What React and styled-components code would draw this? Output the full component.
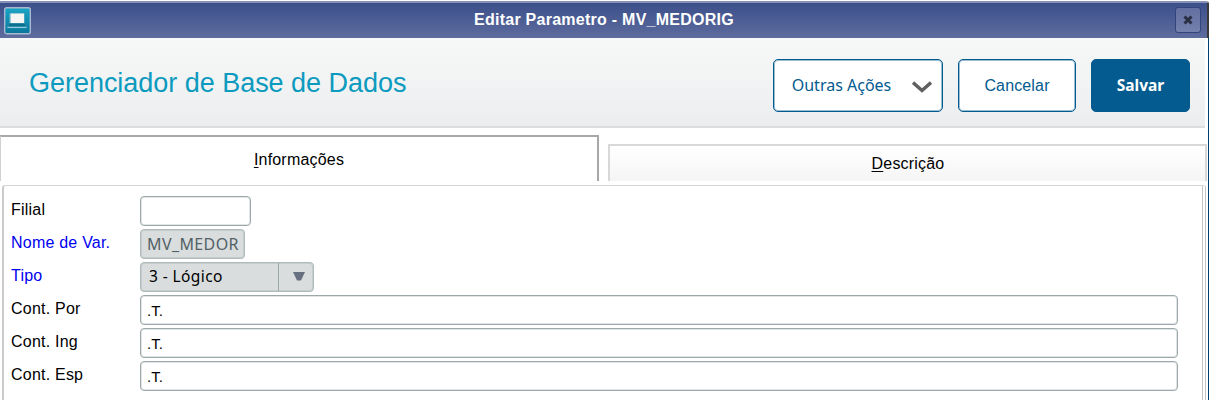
import React, { useState } from 'react';
import styled, { createGlobalStyle } from 'styled-components';

const GlobalStyle = createGlobalStyle`
  * {
    box-sizing: border-box;
  }

  body {
    margin: 0;
    background: #fff;
    font-family: 'Liberation Sans', Arial, sans-serif;
    font-size: 16px;
    color: #000;
    overflow: hidden;
  }
`;

const Window = styled.div`
  width: 1210px;
  height: 400px;
  padding-top: 1px;
  display: flex;
  flex-direction: column;
`;

const TitleBar = styled.div`
  width: 1209px;
  height: 37px;
  padding: 0 6px 0 4px;
  display: flex;
  align-items: center;
  justify-content: space-between;
  background: linear-gradient(#3b4f8a, #5e6c9e);
  border-top: 2px solid #8790b6;
  border-right: 2px solid #3a3a3c;
  border-top-right-radius: 3px;
`;

const WindowTitle = styled.div`
  color: #fff;
  font-weight: bold;
  font-size: 16px;
  letter-spacing: 0.26px;
  line-height: 18px;
  margin: 0 0 2px 2px;
`;

const CloseButton = styled.button`
  width: 26px;
  height: 26px;
  padding: 0;
  margin-bottom: 2px;
  display: flex;
  align-items: center;
  justify-content: center;
  background: linear-gradient(#6270a1, #7480ad);
  border: 1px solid #33437c;
  border-radius: 3px;
`;

const Body = styled.div`
  width: 1209px;
  flex: 1;
  min-height: 0;
  padding-right: 2px;
  display: flex;
  flex-direction: column;
  border-right: 1px solid #003f70;
`;

const Header = styled.div`
  width: 1205px;
  height: 90px;
  padding: 0 15px 0 29px;
  display: flex;
  align-items: center;
  justify-content: space-between;
  background: linear-gradient(#f6f8f8, #f3f5f5 35%, #ecedef);
  border-bottom: 2px solid #dcdddf;
`;

const PageTitle = styled.div`
  color: #0c9abe;
  font-size: 27px;
  letter-spacing: -0.03px;
  line-height: 32px;
  padding-top: 2px;
`;

const Actions = styled.div`
  display: flex;
  padding-top: 6px;
`;

const Button = styled.button`
  width: ${(props) => props.$width}px;
  height: 53px;
  margin-left: ${(props) => props.$gap || 0}px;
  padding: ${(props) => (props.$plain ? '2px 0 0' : props.$menu ? '0 0 0 8px' : '0')};
  display: flex;
  align-items: center;
  justify-content: center;
  color: ${(props) => (props.$primary ? '#fff' : '#045b8f')};
  background: ${(props) => (props.$primary ? '#045b8f' : '#fff')};
  border: 1px solid #045b8f;
  border-radius: 5px;
  box-shadow: inset 0 0 0 1px rgba(4, 91, 143, 0.4);
  font-family: ${(props) => (props.$plain ? "'Liberation Sans', Arial" : "'Noto Sans', 'Open Sans'")}, sans-serif;
  font-size: ${(props) => props.$size || 16}px;
  font-weight: ${(props) => (props.$primary ? 700 : 400)};
  letter-spacing: ${(props) => (props.$plain ? 0.15 : 0)}px;
`;

const Chevron = styled.svg`
  margin: 3px 0 0 21px;
`;

const Tabs = styled.div`
  width: 1207px;
  height: 53px;
  display: flex;
  align-items: flex-end;
  justify-content: space-between;
`;

const Tab = styled.button`
  width: 599px;
  height: ${(props) => (props.$active ? 46 : 37)}px;
  padding: ${(props) => (props.$active ? '1px 0 0' : '1px 0 1px 1px')};
  background: ${(props) => (props.$active ? '#fff' : 'linear-gradient(#fff, #f5f5f5)')};
  border: 0 solid;
  border-width: ${(props) => (props.$active ? '2px 2px 0 1px' : '2px 2px 0 2px')};
  border-color: ${(props) => (props.$active ? '#a8a8a8 #a8a8a8 #fff #d0d0d0' : '#d8d8d8')};
  font-family: 'Liberation Sans', Arial, sans-serif;
  font-size: 16px;
  letter-spacing: 0.2px;
  color: #000;
`;

const AccessKey = styled.span`
  text-decoration: underline;
  text-underline-offset: 2px;
`;

const Panel = styled.div`
  width: 1204px;
  flex: 1;
  margin: 4px 0 0 2px;
  padding: 10px 0 0 8px;
  display: flex;
  flex-direction: column;
  gap: 4px;
  border: 1px solid #d4d4d4;
  border-bottom: 0;
  border-left: 2px solid #cbcbcb;
  border-right: 4px double #c4c4c4;
  border-radius: 3px 3px 0 0;
`;

const Row = styled.div`
  height: 29px;
  display: flex;
`;

const Label = styled.label`
  width: 129px;
  line-height: 28px;
  margin-left: -1px;
  letter-spacing: 0.22px;
  color: ${(props) => (props.$required ? '#0000f0' : '#000')};
`;

const Input = styled.input`
  width: ${(props) => props.$width}px;
  height: 30px;
  padding: 1px 0 0 6px;
  border: 1px solid #9da8aa;
  border-radius: 4px;
  box-shadow: inset 0 0 0 1px rgba(157, 168, 170, 0.3);
  outline: none;
  background: #fff;
  color: #000;
  font-family: 'Liberation Sans', Arial, sans-serif;
  font-size: 15px;

  &:disabled {
    padding-top: 0;
    background: #d9dddd;
    border-color: #b0babb;
    color: #536166;
    font-family: 'Noto Sans', 'Open Sans', sans-serif;
    font-size: 16px;
    letter-spacing: 0.4px;
  }
`;

const Select = styled.div`
  width: 174px;
  height: 30px;
  display: flex;
  background: #d9dddd;
  border: 1px solid #b0babb;
  border-radius: 4px;
  box-shadow: inset 0 0 0 1px rgba(157, 168, 170, 0.3);
  font-family: 'Noto Sans', 'Open Sans', sans-serif;
  font-size: 15.5px;
  letter-spacing: 0.4px;
`;

const SelectValue = styled.div`
  width: 138px;
  padding-left: 8px;
  line-height: 27px;
  border-right: 1px solid #9da8aa;
`;

const SelectArrow = styled.div`
  flex: 1;
  display: flex;
  align-items: center;
  justify-content: center;
  padding: 0 0 1px 6px;
`;

const MonitorIcon = () => (
  <svg width="27" height="28" viewBox="0 0 27 28">
    <defs>
      <linearGradient id="monitor" x1="0" y1="0" x2="0" y2="1">
        <stop offset="0" stopColor="#1ba5c6" />
        <stop offset="1" stopColor="#08769b" />
      </linearGradient>
    </defs>
    <rect x="0.7" y="0.7" width="25.6" height="26" rx="2" fill="url(#monitor)" stroke="#a9b9d1" strokeWidth="1.4" />
    <path d="M5 6H21V16L23 21H3L5 16Z" fill="#46a5bf" />
    <rect x="6.5" y="6.5" width="13.5" height="9.5" fill="#f3f4f4" />
    <path d="M5 16.5H21L22 19.5H4Z" fill="#08708e" />
    <path d="M3.5 20.5H22.5" stroke="#8dcbdc" strokeWidth="1.2" />
  </svg>
);

const rows = [
  { label: 'Cont. Por', name: 'por' },
  { label: 'Cont. Ing', name: 'ing' },
  { label: 'Cont. Esp', name: 'esp' },
];

const App = () => {
  const [filial, setFilial] = useState('');
  const [values, setValues] = useState({ por: '.T.', ing: '.T.', esp: '.T.' });

  const handleChange = (e) => {
    setValues({ ...values, [e.target.name]: e.target.value });
  };

  return (
    <>
      <GlobalStyle />
      <Window>
        <TitleBar>
          <MonitorIcon />
          <WindowTitle>Editar Parametro - MV_MEDORIG</WindowTitle>
          <CloseButton>
            <svg width="10" height="10" viewBox="0 0 10 10">
              <path d="M1.5 1.5L8.5 8.5M8.5 1.5L1.5 8.5" stroke="#292f43" strokeWidth="3" />
            </svg>
          </CloseButton>
        </TitleBar>
        <Body>
          <Header>
            <PageTitle>Gerenciador de Base de Dados</PageTitle>
            <Actions>
              <Button $width={170} $menu>
                Outras Ações
                <Chevron width="20" height="12" viewBox="0 0 20 12">
                  <path d="M1 1.5L10 9.5L19 1.5" fill="none" stroke="#606060" strokeWidth="3.4" />
                </Chevron>
              </Button>
              <Button $width={118} $gap={15} $plain>Cancelar</Button>
              <Button $width={99} $gap={15} $size={15.5} $primary>Salvar</Button>
            </Actions>
          </Header>
          <Tabs>
            <Tab $active>
              <AccessKey>I</AccessKey>nformações
            </Tab>
            <Tab>
              <AccessKey>D</AccessKey>escrição
            </Tab>
          </Tabs>
          <Panel>
            <Row>
              <Label>Filial</Label>
              <Input $width={111} value={filial} onChange={(e) => setFilial(e.target.value)} />
            </Row>
            <Row>
              <Label $required>Nome de Var.</Label>
              <Input $width={105} value="MV_MEDOR" disabled />
            </Row>
            <Row>
              <Label $required>Tipo</Label>
              <Select>
                <SelectValue>3 - Lógico</SelectValue>
                <SelectArrow>
                  <svg width="12" height="9" viewBox="0 0 12 9">
                    <path d="M0 0H12L8 8.5H4Z" fill="#667080" />
                  </svg>
                </SelectArrow>
              </Select>
            </Row>
            {rows.map((row) => (
              <Row key={row.name}>
                <Label>{row.label}</Label>
                <Input $width={1038} name={row.name} value={values[row.name]} onChange={handleChange} />
              </Row>
            ))}
          </Panel>
        </Body>
      </Window>
    </>
  );
};

export default App;
